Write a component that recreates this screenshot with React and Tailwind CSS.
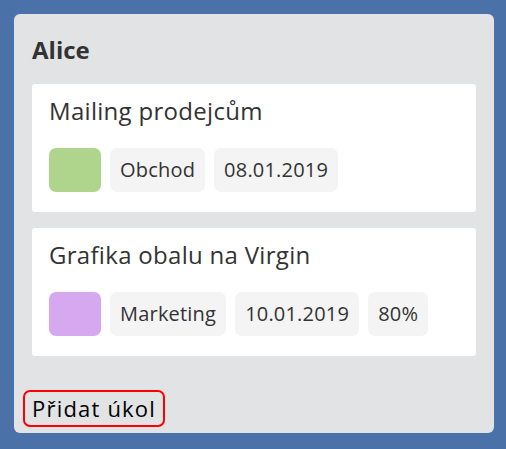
import React from 'react';

const tasks = [
  { title: 'Mailing prodejcům', color: 'bg-[#aed58b]', tags: ['Obchod', '08.01.2019'] },
  { title: 'Grafika obalu na Virgin', color: 'bg-[#d6a8ef]', tags: ['Marketing', '10.01.2019', '80%'] },
];

const TaskCard = ({ task }) => (
  <div className="rounded-[3px] bg-white px-[17px] pt-[9px] pb-[20px]">
    <div className="text-[24px] leading-[36px] tracking-[0.3px] text-[#333]">{task.title}</div>
    <div className="mt-[19px] flex h-[44px] gap-[9px]">
      <div className={`w-[52px] rounded-[7px] ${task.color}`}></div>
      {task.tags.map(tag => (
        <div key={tag} className="rounded-[7px] bg-[#f4f4f4] px-[10px] text-[20px] leading-[44px] tracking-[0.2px] text-[#333]">
          {tag}
        </div>
      ))}
    </div>
  </div>
);

export default function App() {
  return (
    <div className="min-h-screen bg-[#4a72a9] p-[14px]" style={{ fontFamily: '"Open Sans", sans-serif' }}>
      <div className="w-[480px] rounded-md bg-[#e2e3e5] px-[18px] pt-[18px] pb-[6px]">
        <h2 className="text-[24px] font-bold leading-[36px] text-[#333]">Alice</h2>
        <div className="mt-[16px] flex flex-col gap-[16px]">
          {tasks.map(task => (
            <TaskCard key={task.title} task={task} />
          ))}
        </div>
        <button className="mt-[34px] -ml-[9px] flex h-[37px] items-center rounded-[7px] border-2 border-[#ff0000] px-[7px] text-[22px] tracking-[1.2px] text-black">
          Přidat úkol
        </button>
      </div>
    </div>
  );
}
